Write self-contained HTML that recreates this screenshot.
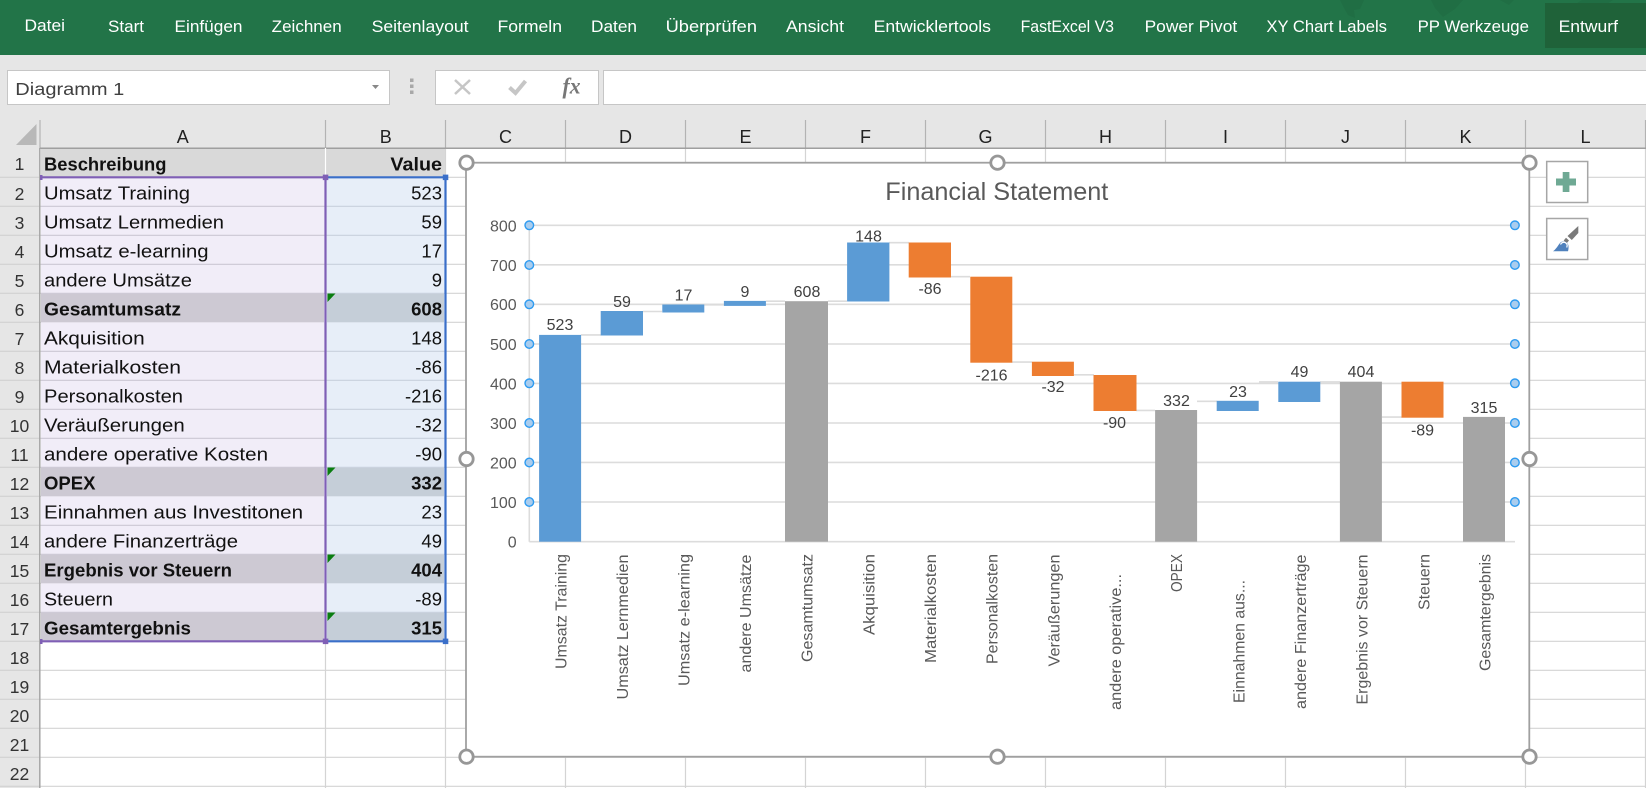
<!DOCTYPE html>
<html lang="de"><head><meta charset="utf-8"><title>Financial Statement</title>
<style>
html,body{margin:0;padding:0;background:#e6e6e6;width:1646px;height:788px;overflow:hidden}
svg{display:block}
text{font-family:"Liberation Sans",sans-serif}
.tab{font-size:16.5px;fill:#fff}
.hd{font-size:18px;fill:#222;text-anchor:middle}
.rn{font-size:17.5px;fill:#333;text-anchor:middle}
.c{font-size:18px;fill:#111}
.b{font-size:18px;fill:#111;font-weight:bold}
.n{font-size:18.5px;fill:#111;text-anchor:end}
.nb{font-size:18.5px;fill:#111;text-anchor:end;font-weight:bold}
.dl{font-size:16px;fill:#404040;text-anchor:middle}
.ya{font-size:16px;fill:#595959;text-anchor:end}
.cat{font-size:15.5px;fill:#595959;text-anchor:end}
</style></head><body>
<svg width="1646" height="788" viewBox="0 0 1646 788" xmlns="http://www.w3.org/2000/svg">
<rect width="1646" height="788" fill="#e6e6e6"/>
<!-- ribbon -->
<rect width="1646" height="55" fill="#227448"/>
<g fill="#206e44">
<path d="M1340 0h24l-4 9-6 1 1 8-7-3-4-7z"/><path d="M1431 0h32l-8 9-12 8-8-9z"/><path d="M1500 0h14l-5 5z"/>
<path d="M1560 14l22-14h31l-14 9-20 3z"/><path d="M1633 18l13-7v7z"/>
</g>
<rect x="1545" y="3" width="101" height="45" fill="#1f6239"/>
<g class="tabs">
<text class="tab" x="24.5" y="31" textLength="40.5" lengthAdjust="spacingAndGlyphs">Datei</text>
<text class="tab" x="108" y="32" textLength="36" lengthAdjust="spacingAndGlyphs">Start</text>
<text class="tab" x="174.5" y="32" textLength="68" lengthAdjust="spacingAndGlyphs">Einfügen</text>
<text class="tab" x="271.7" y="32" textLength="70" lengthAdjust="spacingAndGlyphs">Zeichnen</text>
<text class="tab" x="371.6" y="32" textLength="97" lengthAdjust="spacingAndGlyphs">Seitenlayout</text>
<text class="tab" x="497.5" y="32" textLength="64.5" lengthAdjust="spacingAndGlyphs">Formeln</text>
<text class="tab" x="591" y="32" textLength="46" lengthAdjust="spacingAndGlyphs">Daten</text>
<text class="tab" x="665.6" y="32" textLength="91.4" lengthAdjust="spacingAndGlyphs">Überprüfen</text>
<text class="tab" x="786" y="32" textLength="58" lengthAdjust="spacingAndGlyphs">Ansicht</text>
<text class="tab" x="873.6" y="32" textLength="117.4" lengthAdjust="spacingAndGlyphs">Entwicklertools</text>
<text class="tab" x="1020.6" y="32" textLength="93.4" lengthAdjust="spacingAndGlyphs">FastExcel V3</text>
<text class="tab" x="1144.6" y="32" textLength="92.6" lengthAdjust="spacingAndGlyphs">Power Pivot</text>
<text class="tab" x="1266.4" y="32" textLength="120.6" lengthAdjust="spacingAndGlyphs">XY Chart Labels</text>
<text class="tab" x="1417.6" y="32" textLength="111.4" lengthAdjust="spacingAndGlyphs">PP Werkzeuge</text>
<text class="tab" x="1558.6" y="32" textLength="59.4" lengthAdjust="spacingAndGlyphs">Entwurf</text>
</g>
<!-- formula bar -->
<rect x="7.5" y="70.5" width="382" height="34" fill="#fff" stroke="#c6c6c6"/>
<text x="15.3" y="95" font-size="17.5" fill="#404040" textLength="109" lengthAdjust="spacingAndGlyphs">Diagramm 1</text>
<path d="M372 85h7l-3.5 4z" fill="#888"/>
<g fill="#a8a8a8"><rect x="410" y="78.500" width="3.500" height="3.500"/><rect x="410" y="84.500" width="3.500" height="3.500"/><rect x="410" y="90.500" width="3.500" height="3.500"/></g>
<rect x="435.500" y="70.500" width="163" height="34" fill="#fff" stroke="#c6c6c6"/>
<path d="M455 80l15 14M470 80l-15 14" stroke="#c6c6c6" stroke-width="2.500" fill="none"/>
<path d="M509.500 87.500l6 5.500 10-12" stroke="#c6c6c6" stroke-width="4" fill="none"/>
<text x="562.500" y="93.500" font-size="23" font-weight="bold" font-style="italic" fill="#777" style="font-family:'Liberation Serif',serif" textLength="18" lengthAdjust="spacingAndGlyphs">fx</text>
<rect x="603.500" y="70.500" width="1050" height="34" fill="#fff" stroke="#c6c6c6"/>
<!-- sheet -->
<rect x="40" y="148" width="1606" height="640" fill="#fff"/>
<rect x="0" y="120" width="1646" height="28.500" fill="#e6e6e6"/>
<rect x="0" y="148" width="40" height="640" fill="#e6e6e6"/>
<path d="M36.500 124v21H16z" fill="#b8b8b8"/>
<!-- grid -->
<g stroke="#d4d4d4" stroke-width="1.200" fill="none">
<path d="M325.500 641V788M445.500 148V788M565.500 148V788M685.500 148V788M805.500 148V788M925.500 148V788M1045.500 148V788M1165.500 148V788M1285.500 148V788M1405.500 148V788M1525.500 148V788M1645.500 148V788"/>
<path d="M40 177.300H1646M40 206.300H1646M40 235.300H1646M40 264.300H1646M40 293.300H1646M40 322.300H1646M40 351.300H1646M40 380.300H1646M40 409.300H1646M40 438.300H1646M40 467.300H1646M40 496.300H1646M40 525.300H1646M40 554.300H1646M40 583.300H1646M40 612.300H1646M40 641.300H1646M40 670.300H1646M40 699.300H1646M40 728.300H1646M40 757.300H1646M40 786.300H1646"/>
</g>
<g stroke="#cdcdcd" stroke-width="1" fill="none">
<path d="M0 177.300H40M0 206.300H40M0 235.300H40M0 264.300H40M0 293.300H40M0 322.300H40M0 351.300H40M0 380.300H40M0 409.300H40M0 438.300H40M0 467.300H40M0 496.300H40M0 525.300H40M0 554.300H40M0 583.300H40M0 612.300H40M0 641.300H40M0 670.300H40M0 699.300H40M0 728.300H40M0 757.300H40M0 786.300H40"/>
</g>
<g stroke="#b3b3b3" stroke-width="1.200" fill="none">
<path d="M40 120V148M325.500 120V148M445.500 120V148M565.500 120V148M685.500 120V148M805.500 120V148M925.500 120V148M1045.500 120V148M1165.500 120V148M1285.500 120V148M1405.500 120V148M1525.500 120V148M1645.500 120V148"/>
</g>
<path d="M40 148.300H1646" stroke="#9f9f9f" stroke-width="1.500"/>
<path d="M39.800 148V788" stroke="#a6a6a6" stroke-width="1.500"/>
<!-- col headers -->
<g>
<text class="hd" x="182.800" y="142.800">A</text><text class="hd" x="385.800" y="142.800">B</text>
<text class="hd" x="505.500" y="142.800">C</text><text class="hd" x="625.500" y="142.800">D</text>
<text class="hd" x="745.500" y="142.800">E</text><text class="hd" x="865.500" y="142.800">F</text>
<text class="hd" x="985.500" y="142.800">G</text><text class="hd" x="1105.500" y="142.800">H</text>
<text class="hd" x="1225.500" y="142.800">I</text><text class="hd" x="1345.500" y="142.800">J</text>
<text class="hd" x="1465.500" y="142.800">K</text><text class="hd" x="1585.500" y="142.800">L</text>
</g>
<!-- row numbers -->
<g>
<text class="rn" x="19.500" y="170">1</text><text class="rn" x="19.500" y="200">2</text><text class="rn" x="19.500" y="229">3</text>
<text class="rn" x="19.500" y="258">4</text><text class="rn" x="19.500" y="287">5</text><text class="rn" x="19.500" y="316">6</text>
<text class="rn" x="19.500" y="345">7</text><text class="rn" x="19.500" y="374">8</text><text class="rn" x="19.500" y="403">9</text>
<text class="rn" x="19.500" y="432">10</text><text class="rn" x="19.500" y="461">11</text><text class="rn" x="19.500" y="490">12</text>
<text class="rn" x="19.500" y="519">13</text><text class="rn" x="19.500" y="548">14</text><text class="rn" x="19.500" y="577">15</text>
<text class="rn" x="19.500" y="606">16</text><text class="rn" x="19.500" y="635">17</text><text class="rn" x="19.500" y="664">18</text>
<text class="rn" x="19.500" y="693">19</text><text class="rn" x="19.500" y="722">20</text><text class="rn" x="19.500" y="751">21</text>
<text class="rn" x="19.500" y="780">22</text>
</g>
<!-- data cells fill -->
<rect x="41" y="149" width="404" height="28" fill="#d9d9d9"/>
<path d="M325.500 148V177" stroke="#fff" stroke-width="1.200"/>
<rect x="41" y="177" width="284" height="464" fill="#f1edf8"/>
<rect x="326" y="177" width="119" height="464" fill="#e7eef8"/>
<g stroke="#cbc8d3" stroke-width="1.200">
<path d="M41 206.300H325M41 235.300H325M41 264.300H325M41 293.300H325M41 351.300H325M41 380.300H325M41 409.300H325M41 438.300H325M41 467.300H325M41 525.300H325M41 554.300H325M41 612.300H325"/>
</g>
<g stroke="#c8d1dd" stroke-width="1.200">
<path d="M326 206.300H445M326 235.300H445M326 264.300H445M326 293.300H445M326 351.300H445M326 380.300H445M326 409.300H445M326 438.300H445M326 467.300H445M326 525.300H445M326 554.300H445M326 612.300H445"/>
</g>
<g fill="#cdc9d3"><rect x="41" y="293.800" width="283" height="28.500"/><rect x="41" y="467.800" width="283" height="28.500"/><rect x="41" y="554.800" width="283" height="28.500"/><rect x="41" y="612.800" width="283" height="28.500"/></g>
<g fill="#c5ced8"><rect x="327" y="293.800" width="117" height="28.500"/><rect x="327" y="467.800" width="117" height="28.500"/><rect x="327" y="554.800" width="117" height="28.500"/><rect x="327" y="612.800" width="117" height="28.500"/></g>
<g fill="#0a7d10"><path d="M327.500 293.500h8l-8 8.500z"/><path d="M327.500 467.500h8l-8 8.500z"/><path d="M327.500 554.500h8l-8 8.500z"/><path d="M327.500 612.500h8l-8 8.500z"/></g>
<!-- cell text -->
<text class="b" x="44" y="170.500" textLength="122.500" lengthAdjust="spacingAndGlyphs">Beschreibung</text>
<text class="nb" x="442" y="170.500" textLength="51.600" lengthAdjust="spacingAndGlyphs">Value</text>
<text class="c" x="44" y="199.500" textLength="146" lengthAdjust="spacingAndGlyphs">Umsatz Training</text><text class="n" x="442" y="199.500">523</text>
<text class="c" x="44" y="228.500" textLength="180" lengthAdjust="spacingAndGlyphs">Umsatz Lernmedien</text><text class="n" x="442" y="228.500">59</text>
<text class="c" x="44" y="257.500" textLength="164.600" lengthAdjust="spacingAndGlyphs">Umsatz e-learning</text><text class="n" x="442" y="257.500">17</text>
<text class="c" x="44" y="286.500" textLength="148" lengthAdjust="spacingAndGlyphs">andere Umsätze</text><text class="n" x="442" y="286.500">9</text>
<text class="b" x="44" y="315.500" textLength="137" lengthAdjust="spacingAndGlyphs">Gesamtumsatz</text><text class="nb" x="442" y="315.500">608</text>
<text class="c" x="44" y="344.500" textLength="100.700" lengthAdjust="spacingAndGlyphs">Akquisition</text><text class="n" x="442" y="344.500">148</text>
<text class="c" x="44" y="373.500" textLength="137" lengthAdjust="spacingAndGlyphs">Materialkosten</text><text class="n" x="442" y="373.500">-86</text>
<text class="c" x="44" y="402.500" textLength="139" lengthAdjust="spacingAndGlyphs">Personalkosten</text><text class="n" x="442" y="402.500">-216</text>
<text class="c" x="44" y="431.500" textLength="140.700" lengthAdjust="spacingAndGlyphs">Veräußerungen</text><text class="n" x="442" y="431.500">-32</text>
<text class="c" x="44" y="460.500" textLength="224" lengthAdjust="spacingAndGlyphs">andere operative Kosten</text><text class="n" x="442" y="460.500">-90</text>
<text class="b" x="44" y="489.500" textLength="51.500" lengthAdjust="spacingAndGlyphs">OPEX</text><text class="nb" x="442" y="489.500">332</text>
<text class="c" x="44" y="518.500" textLength="259" lengthAdjust="spacingAndGlyphs">Einnahmen aus Investitonen</text><text class="n" x="442" y="518.500">23</text>
<text class="c" x="44" y="547.500" textLength="194" lengthAdjust="spacingAndGlyphs">andere Finanzerträge</text><text class="n" x="442" y="547.500">49</text>
<text class="b" x="44" y="576.500" textLength="188" lengthAdjust="spacingAndGlyphs">Ergebnis vor Steuern</text><text class="nb" x="442" y="576.500">404</text>
<text class="c" x="44" y="605.500" textLength="69" lengthAdjust="spacingAndGlyphs">Steuern</text><text class="n" x="442" y="605.500">-89</text>
<text class="b" x="44" y="634.500" textLength="147" lengthAdjust="spacingAndGlyphs">Gesamtergebnis</text><text class="nb" x="442" y="634.500">315</text>
<!-- selection -->
<g fill="none" stroke-width="2.200">
<path d="M41 177.300H325.500V641.300H41" stroke="#7f5fb5"/>
<path d="M325.500 177.300H445.500V641.300H325.500" stroke="#3a6fc9"/>
</g>
<rect x="40" y="175" width="2.500" height="5" fill="#7f5fb5"/><rect x="40" y="639" width="2.500" height="5" fill="#7f5fb5"/>
<rect x="322.800" y="174.600" width="5.500" height="5.500" fill="#7f5fb5"/><rect x="322.800" y="638.600" width="5.500" height="5.500" fill="#7f5fb5"/>
<rect x="442.800" y="174.600" width="5.500" height="5.500" fill="#3a6fc9"/><rect x="442.800" y="638.600" width="5.500" height="5.500" fill="#3a6fc9"/>
<!-- chart -->
<rect x="466" y="162.700" width="1063.300" height="594" fill="#fff" stroke="#a0a0a0" stroke-width="1.800"/>
<text x="885.300" y="200" font-size="25" fill="#595959" textLength="223" lengthAdjust="spacingAndGlyphs">Financial Statement</text>
<g stroke="#dcdcdc" stroke-width="1.600" fill="none">
<path d="M529.300 225.300H1515M529.300 264.800H1515M529.300 304.300H1515M529.300 344H1515M529.300 383.400H1515M529.300 423H1515M529.300 462.400H1515M529.300 502H1515M529.300 541.700H1515"/>
<path d="M529.300 225.300V541.700"/>
</g>
<!-- connectors -->
<g stroke="#dcdcdc" stroke-width="1.600" fill="none">
<path d="M581 334.900H601M643 311.500H662M704 304.800H724M766 301.200H785M828 301.200H847M889 242.700H909M951 276.700H970M1012 362.100H1032M1074 374.800H1094M1136 410.400H1155M1197 401.300H1217M1259 381.900H1278M1320 381.900H1340M1382 417.100H1402"/>
</g>
<!-- bars -->
<g fill="#5b9bd5">
<rect x="539.100" y="334.900" width="42" height="206.800"/><rect x="600.700" y="311" width="42.300" height="24.500"/>
<rect x="662.300" y="304.500" width="42" height="8"/><rect x="723.900" y="300.900" width="42" height="5"/>
<rect x="847.100" y="242.500" width="42.300" height="59"/><rect x="1216.700" y="400.800" width="42" height="10.200"/><rect x="1278.300" y="381.700" width="42" height="20.300"/>
</g>
<g fill="#ed7d31">
<rect x="908.700" y="242.500" width="42.300" height="35"/><rect x="970.300" y="276.700" width="42" height="86"/>
<rect x="1031.900" y="361.700" width="42" height="14.300"/><rect x="1093.500" y="375" width="43" height="36"/><rect x="1401.500" y="381.700" width="42" height="36"/>
</g>
<g fill="#a5a5a5">
<rect x="785" y="301.200" width="43" height="240.500"/><rect x="1155.100" y="410" width="42" height="131.700"/>
<rect x="1339.900" y="381.700" width="42" height="160"/><rect x="1463" y="416.900" width="42" height="124.800"/>
</g>
<!-- axis labels -->
<g>
<text class="ya" x="516.700" y="231.300">800</text><text class="ya" x="516.700" y="271">700</text><text class="ya" x="516.700" y="310">600</text>
<text class="ya" x="516.700" y="350">500</text><text class="ya" x="516.700" y="389.300">400</text><text class="ya" x="516.700" y="429">300</text>
<text class="ya" x="516.700" y="468.300">200</text><text class="ya" x="516.700" y="508">100</text><text class="ya" x="516.700" y="547.500">0</text>
</g>
<!-- data labels -->
<g>
<text class="dl" x="560" y="330.200">523</text><text class="dl" x="622" y="307.200">59</text><text class="dl" x="683.500" y="300.500">17</text>
<text class="dl" x="745" y="297.200">9</text><text class="dl" x="807" y="297.200">608</text><text class="dl" x="868.500" y="241.500">148</text>
<text class="dl" x="930" y="294.200">-86</text><text class="dl" x="991.500" y="380.500">-216</text><text class="dl" x="1053" y="392.200">-32</text>
<text class="dl" x="1114.500" y="428.200">-90</text><text class="dl" x="1176.500" y="406.200">332</text><text class="dl" x="1238" y="397.200">23</text>
<text class="dl" x="1299.500" y="377.200">49</text><text class="dl" x="1361" y="377.200">404</text><text class="dl" x="1422.500" y="435.500">-89</text><text class="dl" x="1484" y="413.200">315</text>
</g>
<!-- category labels -->
<g>
<text class="cat" transform="translate(566.300 554) rotate(-90)" textLength="115" lengthAdjust="spacingAndGlyphs">Umsatz Training</text>
<text class="cat" transform="translate(628 554.500) rotate(-90)" textLength="145" lengthAdjust="spacingAndGlyphs">Umsatz Lernmedien</text>
<text class="cat" transform="translate(689.500 554) rotate(-90)" textLength="132" lengthAdjust="spacingAndGlyphs">Umsatz e-learning</text>
<text class="cat" transform="translate(751 554.500) rotate(-90)" textLength="118" lengthAdjust="spacingAndGlyphs">andere Umsätze</text>
<text class="cat" transform="translate(812.500 554) rotate(-90)" textLength="108" lengthAdjust="spacingAndGlyphs">Gesamtumsatz</text>
<text class="cat" transform="translate(874.500 554) rotate(-90)" textLength="81" lengthAdjust="spacingAndGlyphs">Akquisition</text>
<text class="cat" transform="translate(936 554) rotate(-90)" textLength="109" lengthAdjust="spacingAndGlyphs">Materialkosten</text>
<text class="cat" transform="translate(997.500 554) rotate(-90)" textLength="110" lengthAdjust="spacingAndGlyphs">Personalkosten</text>
<text class="cat" transform="translate(1059.500 554.500) rotate(-90)" textLength="112" lengthAdjust="spacingAndGlyphs">Veräußerungen</text>
<text class="cat" transform="translate(1121 574) rotate(-90)" textLength="136" lengthAdjust="spacingAndGlyphs">andere operative...</text>
<text class="cat" transform="translate(1182 554) rotate(-90)" textLength="38" lengthAdjust="spacingAndGlyphs">OPEX</text>
<text class="cat" transform="translate(1244.500 580) rotate(-90)" textLength="123" lengthAdjust="spacingAndGlyphs">Einnahmen aus...</text>
<text class="cat" transform="translate(1306 554.500) rotate(-90)" textLength="154.500" lengthAdjust="spacingAndGlyphs">andere Finanzerträge</text>
<text class="cat" transform="translate(1367.500 554.500) rotate(-90)" textLength="150" lengthAdjust="spacingAndGlyphs">Ergebnis vor Steuern</text>
<text class="cat" transform="translate(1429.500 554) rotate(-90)" textLength="56" lengthAdjust="spacingAndGlyphs">Steuern</text>
<text class="cat" transform="translate(1490.500 554) rotate(-90)" textLength="117" lengthAdjust="spacingAndGlyphs">Gesamtergebnis</text>
</g>
<!-- series handles -->
<g fill="#aacdee" stroke="#2e9bf0" stroke-width="1.400">
<circle cx="529.300" cy="225.300" r="4.300"/><circle cx="529.300" cy="265" r="4.300"/><circle cx="529.300" cy="304.300" r="4.300"/><circle cx="529.300" cy="344" r="4.300"/><circle cx="529.300" cy="383.300" r="4.300"/><circle cx="529.300" cy="423" r="4.300"/><circle cx="529.300" cy="462.500" r="4.300"/><circle cx="529.300" cy="502" r="4.300"/>
<circle cx="1514.900" cy="225.300" r="4.300"/><circle cx="1514.900" cy="265" r="4.300"/><circle cx="1514.900" cy="304.300" r="4.300"/><circle cx="1514.900" cy="344" r="4.300"/><circle cx="1514.900" cy="383.300" r="4.300"/><circle cx="1514.900" cy="423" r="4.300"/><circle cx="1514.900" cy="462.500" r="4.300"/><circle cx="1514.900" cy="502" r="4.300"/>
</g>
<!-- chart handles -->
<g fill="#fff" stroke="#979797" stroke-width="2.800">
<circle cx="466.500" cy="162.700" r="6.700"/><circle cx="997.500" cy="162.700" r="6.700"/><circle cx="1529.500" cy="162.700" r="6.700"/>
<circle cx="466.500" cy="459" r="6.700"/><circle cx="1529.500" cy="459" r="6.700"/>
<circle cx="466.500" cy="756.700" r="6.700"/><circle cx="997.500" cy="756.700" r="6.700"/><circle cx="1529.500" cy="756.700" r="6.700"/>
</g>
<!-- side buttons -->
<rect x="1546.700" y="161.500" width="41" height="41" fill="#fff" stroke="#a6a6a6" stroke-width="1.500"/>
<path d="M1562.700 172h6.700v6.500H1576v7h-6.600v6.500h-6.700v-6.500H1556v-7h6.700z" fill="#6fa994"/>
<rect x="1546.700" y="218.500" width="41" height="41" fill="#fff" stroke="#a6a6a6" stroke-width="1.500"/>
<path d="M1578.300 226v7l-6.500 7-4.300-4z" fill="#7a7a7a"/>
<path d="M1569 240.500l-2.300 2.700-3-2.700 2.300-2.700z" fill="#7a7a7a"/>
<path d="M1553 251.300c3.500-2.500 5-6 7-8.300 1.500-1.800 5-2.300 7-.3 2 2 1.800 5.600 1 8.600z" fill="#4f81bd"/>
<path d="M1560.500 244.500c1-2.200 3.500-2.800 5.200-1.700 1.600 1 1.800 3 1 4.700" fill="none" stroke="#fff" stroke-width="1.300"/>
</svg>
</body></html>
